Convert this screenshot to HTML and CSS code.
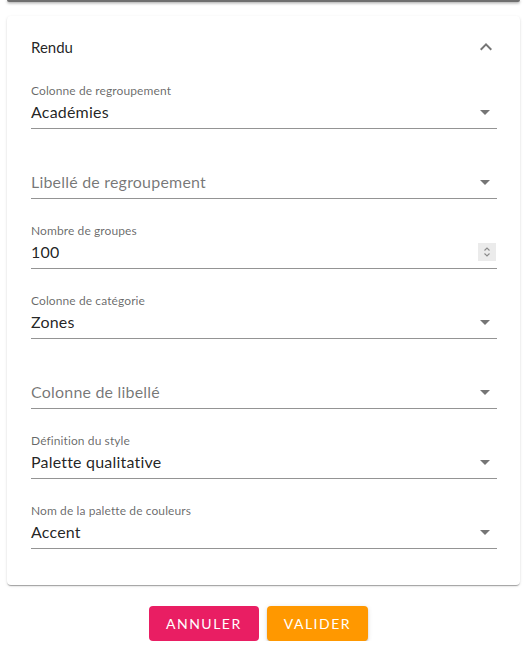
FILE: index.html
```html
<!DOCTYPE html>
<html lang="fr">
<head>
<meta charset="utf-8">
<title>Rendu</title>
<link rel="stylesheet" href="styles.css">
</head>
<body>
<div class="prev"></div>
<section class="card">
  <div class="card-head">
    <span class="title">Rendu</span>
    <svg class="chev" viewBox="0 0 24 24" width="24" height="24"><path d="M12 8l-6 6 1.41 1.41L12 10.83l4.59 4.58L18 14z"/></svg>
  </div>

  <div class="field">
    <div class="label">Colonne de regroupement</div>
    <div class="control"><span class="value">Académies</span><svg class="drop" viewBox="0 0 24 24" width="24" height="24"><path d="M7 10l5 5 5-5z"/></svg></div>
  </div>

  <div class="field">
    <div class="label label-empty">&nbsp;</div>
    <div class="control"><span class="value placeholder">Libellé de regroupement</span><svg class="drop" viewBox="0 0 24 24" width="24" height="24"><path d="M7 10l5 5 5-5z"/></svg></div>
  </div>

  <div class="field">
    <div class="label">Nombre de groupes</div>
    <div class="control"><span class="value">100</span><span class="spin"><svg viewBox="0 0 18 18" width="18" height="18"><path d="M6.5 7.5L9 5l2.5 2.5M6.5 10.5L9 13l2.5-2.5" fill="none" stroke="#8a8a8a" stroke-width="1.1"/></svg></span></div>
  </div>

  <div class="field">
    <div class="label">Colonne de catégorie</div>
    <div class="control"><span class="value">Zones</span><svg class="drop" viewBox="0 0 24 24" width="24" height="24"><path d="M7 10l5 5 5-5z"/></svg></div>
  </div>

  <div class="field">
    <div class="label label-empty">&nbsp;</div>
    <div class="control"><span class="value placeholder">Colonne de libellé</span><svg class="drop" viewBox="0 0 24 24" width="24" height="24"><path d="M7 10l5 5 5-5z"/></svg></div>
  </div>

  <div class="field">
    <div class="label">Définition du style</div>
    <div class="control"><span class="value">Palette qualitative</span><svg class="drop" viewBox="0 0 24 24" width="24" height="24"><path d="M7 10l5 5 5-5z"/></svg></div>
  </div>

  <div class="field">
    <div class="label">Nom de la palette de couleurs</div>
    <div class="control"><span class="value">Accent</span><svg class="drop" viewBox="0 0 24 24" width="24" height="24"><path d="M7 10l5 5 5-5z"/></svg></div>
  </div>
</section>

<div class="actions">
  <button class="btn btn-cancel">Annuler</button>
  <button class="btn btn-ok">Valider</button>
</div>
</body>
</html>
```

FILE: styles.css
```css
html, body {
  margin: 0;
  padding: 0;
  background: #ffffff;
}
body {
  font-family: "Lato", "Noto Sans", sans-serif;
  color: rgba(0, 0, 0, 0.87);
  width: 525px;
}
.prev {
  margin: 0 5px 0 7px;
  height: 2px;
  background: #6f6f6f;
  border-radius: 0 0 4px 4px;
  box-shadow: 0 1px 3px rgba(0, 0, 0, 0.45);
}
.card {
  margin: 14px 5px 0 7px;
  background: #fff;
  border-radius: 4px;
  box-shadow: 0 2px 1px -1px rgba(0,0,0,0.2), 0 1px 1px 0 rgba(0,0,0,0.14), 0 1px 3px 0 rgba(0,0,0,0.12);
  padding: 20px 23px 36px 24px;
}
.card-head {
  display: flex;
  align-items: center;
  justify-content: space-between;
  height: 22px;
}
.title {
  font-size: 15px;
  line-height: 22px;
}
.chev {
  fill: #757575;
  margin-right: -1px;
}
.field {
  padding-top: 24px;
}
.card-head + .field {
  padding-top: 25px;
}
.label {
  font-size: 12px;
  line-height: 16px;
  letter-spacing: 0.1px;
  color: rgba(0, 0, 0, 0.6);
}
.control {
  display: flex;
  align-items: center;
  justify-content: space-between;
  height: 24px;
  margin-top: 1px;
  padding-bottom: 4px;
  border-bottom: 1px solid rgba(0, 0, 0, 0.42);
}
.value {
  font-size: 16px;
  line-height: 24px;
  letter-spacing: 0.2px;
}
.placeholder {
  color: rgba(0, 0, 0, 0.55);
}
.drop {
  fill: #757575;
}
.spin {
  display: flex;
  width: 18px;
  height: 18px;
  background: #ebebeb;
  margin-right: 1px;
}
.actions {
  display: flex;
  justify-content: center;
  margin-top: 21px;
}
.btn {
  font-family: "Lato", "Noto Sans", sans-serif;
  font-size: 14px;
  font-weight: 400;
  letter-spacing: 1.5px;
  text-transform: uppercase;
  color: #fff;
  border: 0;
  border-radius: 4px;
  height: 35px;
  padding: 0 17px;
  margin-right: 8px;
}
.btn-cancel {
  background: #e91e63;
}
.btn-ok {
  background: #ff9800;
  box-shadow: 0 3px 1px -2px rgba(0,0,0,0.2), 0 2px 2px 0 rgba(0,0,0,0.14), 0 1px 5px 0 rgba(0,0,0,0.12);
}
```
